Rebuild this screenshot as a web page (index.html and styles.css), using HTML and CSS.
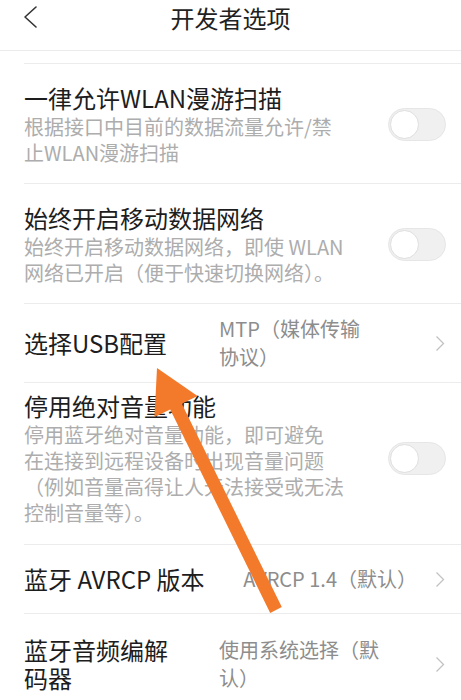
FILE: index.html
```html
<!DOCTYPE html>
<html lang="zh-CN">
<head>
<meta charset="utf-8">
<title>开发者选项</title>
<link rel="stylesheet" href="styles.css">
</head>
<body>
<div class="page">
  <header class="header">
    <svg class="back" width="16" height="24" viewBox="0 0 16 24"><path d="M13 2 L2 12 L13 22" fill="none" stroke="#333" stroke-width="1.6" stroke-linecap="round" stroke-linejoin="round"/></svg>
    <div class="header-title">开发者选项</div>
  </header>
  <div class="tail"></div>

  <div class="item">
    <div class="text">
      <div class="title">一律允许WLAN漫游扫描</div>
      <div class="sub">根据接口中目前的数据流量允许/禁<br>止WLAN漫游扫描</div>
    </div>
    <div class="toggle"><div class="knob"></div></div>
  </div>

  <div class="item">
    <div class="text">
      <div class="title">始终开启移动数据网络</div>
      <div class="sub">始终开启移动数据网络，即使 WLAN<br>网络已开启（便于快速切换网络）。</div>
    </div>
    <div class="toggle"><div class="knob"></div></div>
  </div>

  <div class="item item-nav">
    <div class="text">
      <div class="title">选择USB配置</div>
    </div>
    <div class="value">MTP（媒体传输<br>协议）</div>
    <svg class="chev" width="10" height="17" viewBox="0 0 10 17"><path d="M1.5 1.5 L8.5 8.5 L1.5 15.5" fill="none" stroke="#c2c2c2" stroke-width="1.3"/></svg>
  </div>

  <div class="item item-long">
    <div class="text">
      <div class="title">停用绝对音量功能</div>
      <div class="sub">停用蓝牙绝对音量功能，即可避免<br>在连接到远程设备时出现音量问题<br>（例如音量高得让人无法接受或无法<br>控制音量等）。</div>
    </div>
    <div class="toggle"><div class="knob"></div></div>
  </div>

  <div class="item item-single">
    <div class="text">
      <div class="title">蓝牙 AVRCP 版本</div>
    </div>
    <div class="value value-right">AVRCP 1.4（默认）</div>
    <svg class="chev" width="10" height="17" viewBox="0 0 10 17"><path d="M1.5 1.5 L8.5 8.5 L1.5 15.5" fill="none" stroke="#c2c2c2" stroke-width="1.3"/></svg>
  </div>

  <div class="item item-last">
    <div class="text">
      <div class="title title-two">蓝牙音频编解<br>码器</div>
    </div>
    <div class="value">使用系统选择（默<br>认）</div>
    <svg class="chev" width="10" height="17" viewBox="0 0 10 17"><path d="M1.5 1.5 L8.5 8.5 L1.5 15.5" fill="none" stroke="#c2c2c2" stroke-width="1.3"/></svg>
  </div>

  <svg class="arrow" width="461" height="700" viewBox="0 0 461 700">
    <polygon points="157,368 197.5,396 181.8,403.7 281.8,607.1 270.2,612.9 170.2,409.5 154.5,417" fill="#f47a2b"/>
  </svg>
</div>
</body>
</html>
```

FILE: styles.css
```css
* { box-sizing: border-box; }
html, body {
  margin: 0;
  padding: 0;
  background: #ffffff;
}
body {
  font-family: "Noto Sans CJK SC", "Noto Sans", sans-serif;
  color: #1d1d1d;
  width: 461px;
  height: 700px;
  overflow: hidden;
}
.page {
  position: relative;
  width: 461px;
  height: 700px;
  overflow: hidden;
}
.header {
  height: 51px;
  border-bottom: 1px solid #ebebeb;
  display: flex;
  align-items: flex-start;
  justify-content: center;
  position: relative;
}
.back {
  position: absolute;
  left: 23px;
  top: 5px;
}
.header-title {
  font-size: 24px;
  line-height: 35px;
  color: #222;
  letter-spacing: 0;
}
.tail {
  height: 13px;
  margin-left: 24px;
  border-bottom: 1px solid #ececec;
}
.item {
  display: flex;
  align-items: center;
  margin-left: 24px;
  padding: 18px 15px 17px 0;
  border-bottom: 1px solid #ececec;
}
.text {
  flex: 1;
  min-width: 0;
}
.title {
  font-size: 24px;
  line-height: 32px;
  color: #1d1d1d;
  white-space: nowrap;
}
.title-two {
  line-height: 28px;
}
.sub {
  font-size: 20px;
  line-height: 26px;
  color: #adadad;
  white-space: nowrap;
}
.toggle {
  width: 58px;
  height: 33px;
  border-radius: 17px;
  background: #f0f0f0;
  border: 1px solid #e6e6e6;
  position: relative;
  flex: none;
}
.knob {
  position: absolute;
  left: 1px;
  top: 1px;
  width: 29px;
  height: 29px;
  border-radius: 50%;
  background: #ffffff;
  border: 1px solid #dedede;
}
.item-nav {
  padding: 11px 16px 11px 0;
}
.item-long {
  padding: 7px 15px 18px 0;
}
.item-single {
  padding: 18px 16px 18px 0;
}
.item-last {
  padding: 22px 16px 22px 0;
  border-bottom: none;
}
.value {
  width: 205px;
  flex: none;
  font-size: 20px;
  line-height: 28px;
  color: #8d8d8d;
  white-space: nowrap;
}
.value-right {
  text-align: right;
  line-height: 32px;
  padding-right: 7px;
}
.chev {
  flex: none;
  margin-left: 11px;
}
.arrow {
  position: absolute;
  left: 0;
  top: 0;
  pointer-events: none;
}
```
